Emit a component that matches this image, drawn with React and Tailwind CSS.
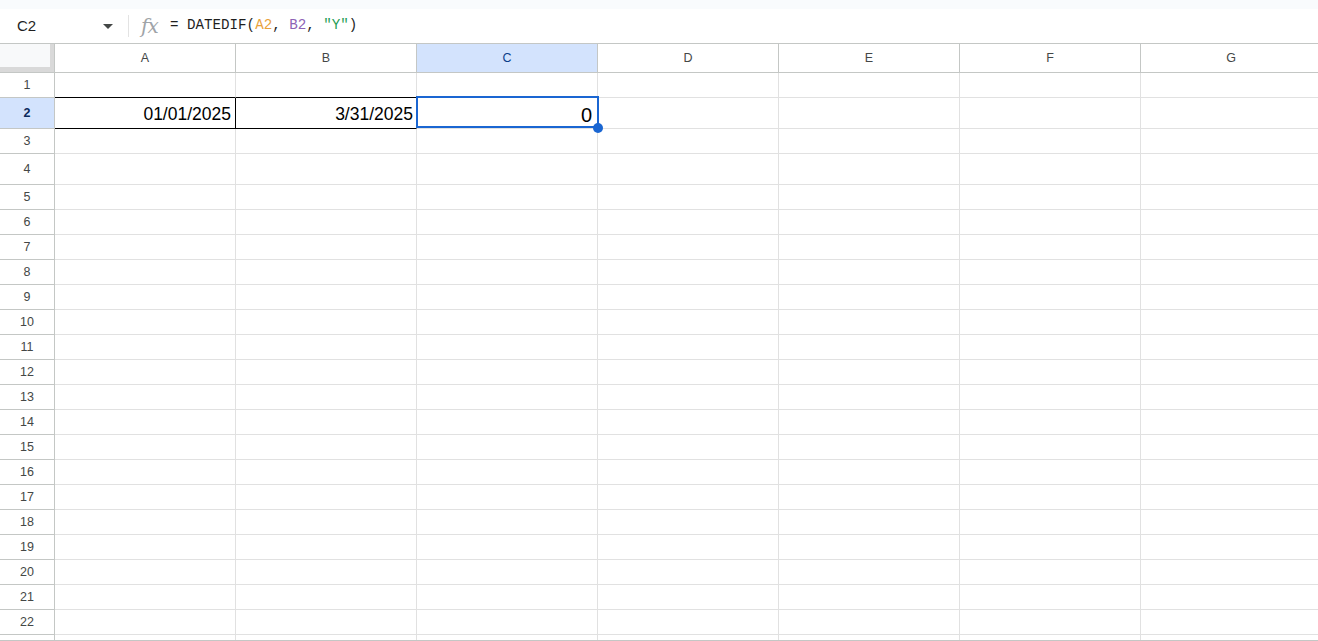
import React from 'react';

const cols = ['A', 'B', 'C', 'D', 'E', 'F', 'G'];
const rowHeights = [25, 31, 25, 31, 25, 25, 25, 25, 25, 25, 25, 25, 25, 25, 25, 25, 25, 25, 25, 25, 25, 25];

const Cell = ({ row, col, height }) => {
  const isA2 = row === 2 && col === 'A';
  const isB2 = row === 2 && col === 'B';
  const isC2 = row === 2 && col === 'C';
  const blackBottom = (row === 1 || row === 2) && (col === 'A' || col === 'B');
  const blackRight = isA2;

  return (
    <div
      className={`shrink-0 w-[181px] border-r border-b flex items-center justify-end pr-[3px] pt-[3px] ${
        isC2 ? 'relative z-10' : ''
      } ${blackRight ? 'border-r-black' : 'border-r-[#e1e1e1]'} ${blackBottom ? 'border-b-black' : 'border-b-[#e1e1e1]'}`}
      style={{ height }}
    >
      {isA2 && <span className="text-[17.5px] text-black leading-none pr-px">01/01/2025</span>}
      {isB2 && <span className="text-[17.5px] text-black leading-none">3/31/2025</span>}
      {isC2 && (
        <>
          <span className="text-[20px] text-black leading-none pr-[2px]">0</span>
          <div className="absolute -top-[2px] -left-px w-[183px] h-[32px] border-2 border-[#1a66d2] pointer-events-none" />
          <div className="absolute -bottom-[5px] -right-[6px] w-[10px] h-[10px] rounded-full bg-[#1a66d2]" />
        </>
      )}
    </div>
  );
};

export default function App() {
  return (
    <div className="w-[1318px] h-[641px] overflow-hidden bg-white font-['Liberation_Sans',Arial,sans-serif] text-[#444746]">
      {/* top strip */}
      <div className="h-[9px] bg-[#f9fbfd]" />

      {/* formula bar */}
      <div className="h-[35px] flex items-center border-b border-[#c4c7c5]">
        <div className="w-[128px] flex items-center pl-[17px] pr-[15px] justify-between">
          <span className="text-[15px] text-[#1f1f1f]">C2</span>
          <span className="w-0 h-0 border-l-[5px] border-r-[5px] border-t-[5px] border-l-transparent border-r-transparent border-t-[#444746]" />
        </div>
        <div className="w-px h-[22px] bg-[#e3e3e3]" />
        <span className="ml-[12px] w-[22px] text-[20px] italic text-[#a0a4a8] font-['DejaVu_Serif',serif] leading-none -tracking-[1px]">fx</span>
        <span className="ml-[7px] font-['Liberation_Mono',monospace] text-[14.2px] text-[#1f1f1f] whitespace-pre">
          {'= DATEDIF('}
          <span className="text-[#e9a23b]">A2</span>
          {', '}
          <span className="text-[#8e63b6]">B2</span>
          {', '}
          <span className="text-[#1f9d55]">"Y"</span>
          {')'}
        </span>
      </div>

      {/* column header */}
      <div className="flex h-[29px]">
        <div className="shrink-0 w-[55px] h-full border-r border-b border-[#c4c7c5] bg-[#f8f9fa] flex">
          <div className="flex-1 flex flex-col">
            <div className="flex-1" />
            <div className="h-[5px] bg-[#d9d9d9]" />
          </div>
          <div className="w-[4px] bg-[#d9d9d9]" />
        </div>
        {cols.map(c => (
          <div
            key={c}
            className={`shrink-0 w-[181px] h-full border-r border-b border-[#c4c7c5] flex items-center justify-center text-[12.5px] ${
              c === 'C' ? 'bg-[#d3e3fd] text-[#0b3e8a]' : 'text-[#444746]'
            }`}
          >
            {c}
          </div>
        ))}
      </div>

      {/* rows */}
      {rowHeights.map((h, i) => {
        const row = i + 1;
        const selected = row === 2;
        return (
          <div key={row} className="flex" style={{ height: h }}>
            <div
              className={`shrink-0 w-[55px] h-full border-r border-b border-[#c4c7c5] flex items-center justify-center text-[12.5px] ${
                selected ? 'bg-[#d3e3fd] font-bold text-[#0b2a5c]' : 'text-[#444746]'
              }`}
            >
              {row}
            </div>
            {cols.map(c => (
              <Cell key={c} row={row} col={c} height={h} />
            ))}
          </div>
        );
      })}

      {/* partial row / bottom edge */}
      <div className="flex h-[6px] border-b border-[#c4c7c5]">
        <div className="shrink-0 w-[55px] h-full border-r border-[#c4c7c5]" />
        {cols.map(c => (
          <div key={c} className="shrink-0 w-[181px] h-full border-r border-[#e1e1e1]" />
        ))}
      </div>
    </div>
  );
}
